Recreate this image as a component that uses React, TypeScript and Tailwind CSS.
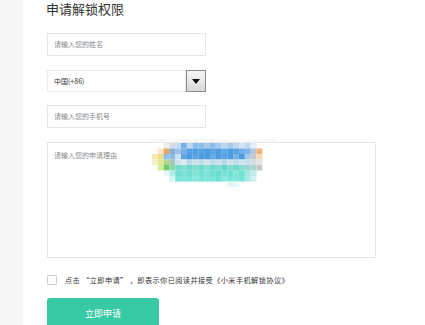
import React from "react";

const rows: { y: number; cells: [number, string][] }[] = [
  { y: 143, cells: [[2, "#f3ebe6"], [3, "#d6dbe6"], [4, "#c4dbf1"], [5, "#78afe5"], [6, "#bdd7f1"], [7, "#8bbeeb"], [8, "#8bbeeb"], [9, "#a6cbee"], [10, "#8bbeeb"], [11, "#a6cbee"], [12, "#bfd9f2"], [13, "#a6cbee"], [14, "#bfd9f2"], [15, "#d4e5f5"], [16, "#bfd9f2"], [17, "#e6eff8"]] },
  { y: 148.5, cells: [[1, "#fbe5c6"], [2, "#e2a865"], [3, "#86aed8"], [4, "#9dc3ea"], [5, "#78b0e5"], [6, "#56a0e2"], [7, "#4e9de1"], [8, "#5aa3e3"], [9, "#4e9de1"], [10, "#5ba4e4"], [11, "#4e9de1"], [12, "#62a7e4"], [13, "#4e9de1"], [14, "#5aa3e3"], [15, "#71aee6"], [16, "#7fb4e6"], [17, "#b4c6d8"], [18, "#f2b27c"]] },
  { y: 154, cells: [[0, "#fae6b0"], [1, "#f1de88"], [2, "#8fc1ee"], [3, "#8cbae8"], [4, "#c7dff4"], [5, "#5ea3e2"], [6, "#4d9ce0"], [7, "#5ea5e4"], [8, "#4d9ce0"], [9, "#4d9ce0"], [10, "#6aabe6"], [11, "#4d9ce0"], [12, "#5aa2e2"], [13, "#4d9ce0"], [14, "#78b2e6"], [15, "#4d9ce0"], [16, "#a8c8e8"], [17, "#c2c8d0"], [18, "#f8d6b6"]] },
  { y: 159.5, cells: [[0, "#f3f1c4"], [1, "#dfe892"], [2, "#aed690"], [3, "#a6c9b6"], [4, "#cfe3ef"], [5, "#dfebf3"], [6, "#b6dbeb"], [7, "#cfe3ed"], [8, "#c0dee8"], [9, "#d3e6ee"], [10, "#c0dee8"], [11, "#cfe3ed"], [12, "#b8dbe6"], [13, "#cfe3ed"], [14, "#c0dee8"], [15, "#d3e6ee"], [16, "#c8dfe8"], [17, "#d6dde3"], [18, "#e2e2e2"]] },
  { y: 165, cells: [[1, "#d2ef94"], [2, "#6fcf70"], [3, "#8fd7ae"], [4, "#76dccf"], [5, "#84ded2"], [6, "#6fd9cc"], [7, "#7edcd0"], [8, "#6fd9cc"], [9, "#86ded3"], [10, "#6fd9cc"], [11, "#7edcd0"], [12, "#62d6c8"], [13, "#7edcd0"], [14, "#6fd9cc"], [15, "#8addd3"], [16, "#9ad9d1"], [17, "#aad6cf"], [18, "#c9c9c9"]] },
  { y: 170.5, cells: [[2, "#e8f8f7"], [3, "#aeefe8"], [4, "#6fe0d3"], [5, "#7de2d6"], [6, "#6fe0d3"], [7, "#84e4d9"], [8, "#6fe0d3"], [9, "#7de2d6"], [10, "#6fe0d3"], [11, "#66ddd0"], [12, "#7de2d6"], [13, "#6fe0d3"], [14, "#84e4d9"], [15, "#6fe0d3"], [16, "#9fe7df"], [17, "#c2e9e8"]] },
  { y: 176, cells: [[3, "#d7f6f3"], [4, "#79e5d9"], [5, "#83e6db"], [6, "#79e5d9"], [7, "#8ae8de"], [8, "#79e5d9"], [9, "#83e6db"], [10, "#79e5d9"], [11, "#70e2d5"], [12, "#8ae8de"], [13, "#79e5d9"], [14, "#83e6db"], [15, "#79e5d9"], [16, "#a8ece5"], [17, "#d2f2f1"]] },
  { y: 181.5, cells: [[13, "#dff8f7"], [14, "#e4f9f8"]] },
];

function Mosaic() {
  return (
    <svg
      className="absolute left-[100px] top-[-4px]"
      width="130"
      height="50"
      viewBox="148 139 130 50"
    >
      <rect x="150" y="139.5" width="130" height="2" fill="#f6f6f6" />
      {rows.map((r, ri) =>
        r.cells.map(([c, col], ci) => (
          <rect
            key={`${ri}-${ci}`}
            x={152 + c * 5.8}
            y={r.y}
            width={5.9}
            height={5.6}
            fill={col}
          />
        ))
      )}
    </svg>
  );
}

export default function App() {
  const font = { fontFamily: '"Noto Sans CJK SC", "Noto Sans", sans-serif' };
  return (
    <div className="flex w-[425px] h-[325px] overflow-hidden bg-white" style={font}>
      <div className="w-[23px] shrink-0 bg-[#f7f7f7]" />
      <div className="flex flex-col pl-[24px] overflow-hidden">
        <div className="shrink-0 h-[18px] leading-[18px] text-[13px] text-[#333] -ml-px">申请解锁权限</div>
        <div className="shrink-0 mt-[15px] w-[159px] h-[23px] border border-[#e6e6e6] flex items-center pl-[6px] text-[7px] text-[#888]">
          请输入您的姓名
        </div>
        <div className="shrink-0 mt-[14px] w-[159px] h-[22px] flex">
          <div className="flex-1 border border-[#ececec] flex items-center pl-[6px] text-[7px] text-[#333]">
            中国(+86)
          </div>
          <div className="w-[20px] h-[22px] border border-[#8a8a8a] bg-gradient-to-b from-[#f6f6f6] to-[#d9d9d9] flex items-center justify-center">
            <svg width="8" height="5" viewBox="0 0 8 5">
              <path d="M0 0 H8 L4 5 Z" fill="#111" />
            </svg>
          </div>
        </div>
        <div className="shrink-0 mt-[13px] w-[159px] h-[23px] border border-[#e6e6e6] flex items-center pl-[6px] text-[7px] text-[#888]">
          请输入您的手机号
        </div>
        <div className="shrink-0 relative mt-[14px] w-[329px] h-[116px] border border-[#e6e6e6] pl-[6px] pt-[7px] text-[7px] text-[#888] leading-[10px]">
          请输入您的申请理由
          <Mosaic />
        </div>
        <div className="shrink-0 mt-[17px] flex items-center h-[10px]">
          <div className="w-[10px] h-[10px] border border-[#cfcfcf] rounded-[1px] bg-white" />
          <span className="ml-[8px] text-[7.2px] tracking-[0.4px] text-[#333] whitespace-pre">
            点击 “立即申请” ，即表示你已阅读并接受《小米手机解锁协议》
          </span>
        </div>
        <div className="shrink-0 mt-[13px] w-[112px] h-[32px] rounded-[3px] bg-[#38caa4] flex items-center justify-center text-white text-[9px] pb-[1px]">
          立即申请
        </div>
      </div>
    </div>
  );
}
